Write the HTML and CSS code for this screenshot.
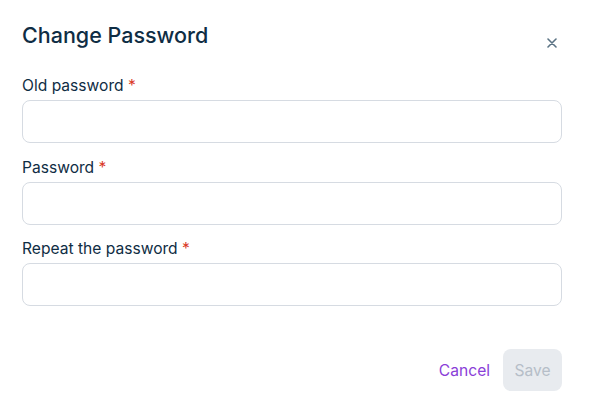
FILE: index.html
```html
<!DOCTYPE html>
<html>
<head>
<meta charset="utf-8">
<link rel="stylesheet" href="styles.css">
</head>
<body>
<div class="dialog">
  <div class="header">
    <h1 class="title">Change Password</h1>
    <button class="close" aria-label="Close">
      <svg width="10" height="10" viewBox="0 0 10 10"><path d="M1 1L9 9M9 1L1 9" stroke="#5b7384" stroke-width="1.6" stroke-linecap="round"/></svg>
    </button>
  </div>
  <div class="fields">
    <div class="field">
      <label class="label">Old password <span class="req">*</span></label>
      <input class="input" type="password">
    </div>
    <div class="field">
      <label class="label">Password <span class="req">*</span></label>
      <input class="input" type="password">
    </div>
    <div class="field">
      <label class="label">Repeat the password <span class="req">*</span></label>
      <input class="input" type="password">
    </div>
  </div>
  <div class="footer">
    <button class="cancel">Cancel</button>
    <button class="save" disabled>Save</button>
  </div>
</div>
</body>
</html>
```
FILE: styles.css
```css
* { box-sizing: border-box; }
html, body { margin: 0; padding: 0; background: #fff; }
body { font-family: Inter, "Noto Sans", sans-serif; color: #0f2d44; }
.dialog { width: 589px; padding: 22px 28px 0 22px; }
.header { display: flex; justify-content: space-between; align-items: flex-start; height: 54px; }
.title { margin: 0; font-size: 21.5px; font-weight: 500; line-height: 26px; color: #0f2d44; }
.close { border: 0; background: none; padding: 0; margin-top: 16px; margin-right: 4px; width: 10px; height: 10px; display: flex; }
.fields { display: flex; flex-direction: column; gap: 14.5px; }
.field { display: flex; flex-direction: column; gap: 4px; }
.label { font-size: 15.6px; line-height: 20px; color: #0f2d44; }
.req { color: #d9371f; }
.input { width: 540px; height: 43px; border: 1px solid #d6dbe2; border-radius: 8px; background: #fff; outline: none; font: inherit; }
.footer { display: flex; justify-content: flex-end; align-items: center; gap: 12px; margin-top: 43px; width: 540px; }
.cancel { border: 0; background: none; padding: 0; margin-right: 1px; font-family: inherit; font-size: 15.6px; color: #8a3ed8; }
.save { border: 0; border-radius: 8px; background: #e8ebef; color: #b6bec8; font-family: inherit; font-size: 15.6px; width: 59px; height: 42px; padding: 0; }
```
